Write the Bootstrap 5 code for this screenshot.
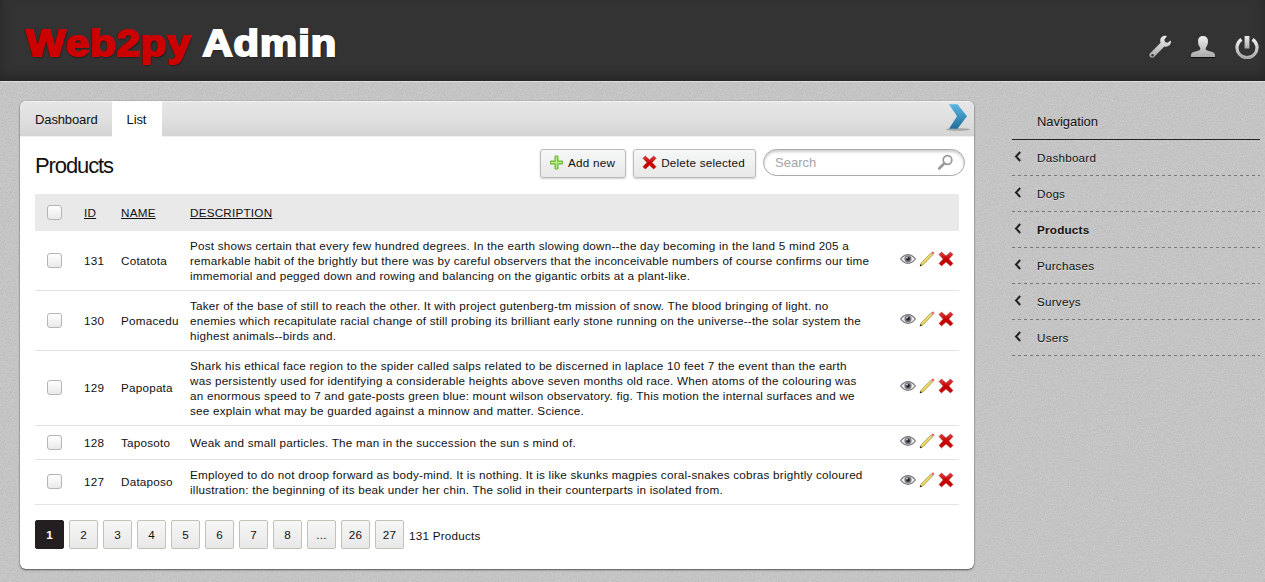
<!DOCTYPE html>
<html lang="en">
<head>
<meta charset="utf-8">
<title>Web2py Admin</title>
<link rel="stylesheet" href="https://cdn.jsdelivr.net/npm/bootstrap@5.3.0/dist/css/bootstrap.min.css">
<style>
body{font-family:"Liberation Sans",Arial,sans-serif;font-size:11.7px;letter-spacing:.22px;line-height:15px;color:#111;height:582px;overflow:hidden;
background:#c3c3c3 url("data:image/svg+xml,%3Csvg xmlns='http://www.w3.org/2000/svg' width='200' height='200'%3E%3Cfilter id='n' x='0' y='0' width='1' height='1' color-interpolation-filters='sRGB'%3E%3CfeTurbulence type='fractalNoise' baseFrequency='.75' numOctaves='2' stitchTiles='stitch'/%3E%3CfeColorMatrix values='.12 0 0 0 .71 .12 0 0 0 .71 .12 0 0 0 .71 0 0 0 0 1'/%3E%3C/filter%3E%3Crect width='200' height='200' filter='url(%23n)'/%3E%3C/svg%3E")}
a{color:inherit;text-decoration:none}
.topbar{height:81px;background:#333;box-shadow:inset 0 -5px 10px #262626,0 1px 0 #ddd;padding:0 6px 0 26px}
.logo{font:700 37px/46px "Liberation Sans",Arial,sans-serif;letter-spacing:.9px;-webkit-text-stroke:2px #fff;text-shadow:1px 1px 2px #000;margin-top:6px;color:#fff;white-space:nowrap;transform:scaleX(1.128);transform-origin:0 50%}
.logo b{color:#c00;-webkit-text-stroke-color:#c00}
.tools{padding-top:12px;gap:18px}
.layout{padding:20px 5px 0 20px}
.panel{width:954px;height:468px;background:#fff;border-radius:6px;box-shadow:0 1px 2px #555,0 0 1px #666;overflow:hidden}
.tabstrip{height:35px;background:linear-gradient(#e6e6e6,#e0e0e0 50%,#d4d4d4);box-shadow:inset 0 1px 0 #f2f2f2,0 1px 0 #f0f0f0;font-size:13px;letter-spacing:-.12px;line-height:37px}
.tabstrip a{padding:0 14px 0 15px;height:36px}
.tabstrip a.current{background:#fff;padding-right:16px}
.headline{font-size:22px;letter-spacing:-1.1px;line-height:28px;margin:1px 0 0;font-weight:400}
.tool-row{height:58px;padding:0 9px 0 15px}
.push{height:29px;margin:0 7px 4px 0;border:1px solid #bbb;border-radius:3px;background:linear-gradient(#f6f7f7,#e8e8e8);box-shadow:0 1px 2px #ccc;padding:0 10px 2px 8px;gap:4px;white-space:nowrap}
.push svg{margin-top:1px}
.find{width:202px;height:27px;margin-bottom:5px;border:1px solid #aaa;border-radius:14px;box-shadow:inset 0 2px 3px #ccc;padding:0 10px 0 11px;color:#a5a5a5;font-size:13px;letter-spacing:0}
.grid{width:924px;margin:0 15px;table-layout:fixed;border-collapse:collapse}
.grid th{background:#e9e9e9;height:37px;font-weight:400;padding:0 5px 1px;text-decoration:underline}
.grid td{border-bottom:1px solid #e4e4e4;padding:7px 5px;white-space:nowrap}
.grid .tall td:nth-child(2),.grid .tall td:nth-child(3){padding:6px 5px 8px}
.grid td:first-child,.grid th:first-child{padding:0 0 1px 12px}
.grid td:last-child{padding:0 5px 4px 0;text-align:right}
.grid .short td{height:34px}
.tick{display:block;width:15px;height:15px;border:1px solid #b5b5b5;border-radius:3px;background:linear-gradient(#fff,#e9e9e9)}
.acts{display:flex;justify-content:flex-end;align-items:center;gap:3px}
.pages{margin:15px 15px 0;gap:5px}
.pages a{width:29px;height:29px;border:1px solid #c2c2b8;border-radius:2px;background:linear-gradient(#f7f7f7,#e8e8e8);display:flex;align-items:center;justify-content:center}
.pages a.on{background:#231f20;border-color:#231f20;color:#fff;font-weight:700}
.total{padding-top:2px}
.side{width:248px;margin-left:38px;text-shadow:0 1px 0 #ddd}
.side h2{font-size:13px;letter-spacing:-.05px;font-weight:400;line-height:39px;height:39px;border-bottom:1px solid #222;margin:0;padding:1px 0 0 25px}
.side a{display:flex;height:36px;align-items:center;padding-bottom:2px;background:repeating-linear-gradient(90deg,#777 0 3px,transparent 3px 6px) 0 100%/100% 1px no-repeat}
.side a svg{margin:0 15px 1px 2px}
</style>
</head>
<body>
<svg width="0" height="0" class="position-absolute">
<defs>
<linearGradient id="silver" x2="0" y2="1"><stop stop-color="#eee"/><stop offset="1" stop-color="#aaa"/></linearGradient>
<linearGradient id="red" x2="0" y2="1"><stop stop-color="#e64545"/><stop offset=".5" stop-color="#c80000"/><stop offset="1" stop-color="#c00"/></linearGradient>
<linearGradient id="blue" x2="0" y2="1"><stop stop-color="#5ab6e2"/><stop offset="1" stop-color="#1f7099"/></linearGradient>
</defs>
<symbol id="cross" viewBox="0 0 16 16"><path d="M3.500 1.200 8 5.300l4.500-4.100 2.300 2.300L10.600 8l4.200 4.500-2.300 2.300L8 10.700l-4.500 4.100-2.300-2.300L5.400 8 1.200 3.500z" fill="url(#red)" stroke="#b00808" stroke-width=".8" stroke-linejoin="round"/></symbol>
<symbol id="pencil" viewBox="0 0 16 16"><path d="M1 15l1.200-3.200L12.300 1.800l1.700 1.700L4.100 13.800z" fill="#e6cf52" stroke="#92803a" stroke-width=".6"/><path d="M3 12.500 12.500 3" stroke="#fff3a0" stroke-width=".7"/><path d="M12.300 1.800 13.300.8q.9-.5 1.700.2.700.8.100 1.600l-1.100 1z" fill="#e66"/><path d="m11.400 2.700 1.900 1.800.7-.8-1.800-1.800z" fill="#bbb"/><path d="M.8 15.200l.7-2 1.400 1.400z" fill="#111"/></symbol>
<symbol id="eye" viewBox="0 0 16 12"><path d="M.6 6Q4 1.700 8 1.700T15.400 6Q12 10.300 8 10.300T.6 6z" fill="#eee" stroke="#777" stroke-width="1.200"/><circle cx="8" cy="5.800" r="3.600" fill="#777c86"/><circle cx="8" cy="5.800" r="1.900" fill="#222"/><circle cx="7" cy="4.600" r=".9" fill="#ddd"/></symbol>
<symbol id="chev" viewBox="0 0 8 11"><path d="M6.200 1 2 5.500 6.200 10" fill="none" stroke="#222" stroke-width="2"/></symbol>
</svg>

<header class="topbar d-flex justify-content-between align-items-center">
<a class="logo" href="#"><b>Web2py</b> Admin</a>
<nav class="tools d-flex">
<svg width="24" height="24" viewBox="0 0 24 24"><path fill="url(#silver)" fill-rule="evenodd" d="M21.800 5.400l-3.300 2.400-2.600-.8-.5-2.500 2.500-3.300C14.600-.2 11.200 2.300 11.200 5.600c0 .8.1 1.500.4 2.100L.9 18.400c-1.700 2.500 1.200 5.400 3.900 3.900L15.400 11.500c3.900 1 7.500-2.200 6.400-6.100zM3.500 19a1.300 1.300 0 1 1 0 2.600 1.300 1.300 0 0 1 0-2.600z"/></svg>
<svg width="26" height="24" viewBox="1 0 26 24"><path d="M1 21.500h24v1.500H1z" fill="#111"/><path d="M13 1c-3.300 0-5 2-5 5.300 0 3 1 4.700 2 6.200.8 1.500.3 2.500-2 3.300-4 1.200-7 1.700-7 4.200v2h24v-2c0-2.500-3-3-7-4.200-2.300-.8-2.800-1.800-2-3.300 1-1.500 2-3.200 2-6.200C18 3 16.300 1 13 1z" fill="url(#silver)"/></svg>
<svg width="24" height="24" viewBox="0 0 24 24"><path d="M6.500 4.300a10 10 0 1 0 11 0" fill="none" stroke="url(#silver)" stroke-width="3.200"/><path d="M9.600 1h4.800v12.500H9.600z" fill="url(#silver)"/></svg>
</nav>
</header>

<main class="layout d-flex">
<section class="panel">
<div class="tabstrip d-flex"><a href="#">Dashboard</a><a class="current" href="#">List</a>
<svg class="ms-auto" width="28" height="35" viewBox="0 0 28 35"><ellipse cx="12" cy="28.500" rx="12" ry="1.300" fill="#999" opacity=".8"/><path d="M3 3.200h8.500l9.500 12-9.500 12.600H3l8-12.600z" fill="url(#blue)"/></svg></div>
<div class="tool-row d-flex align-items-center">
<h1 class="headline me-auto">Products</h1>
<a class="push d-flex align-items-center" href="#"><svg width="15" height="15" viewBox="0 0 14 15"><path d="M5.500 1h3v5H13v3H8.500v5h-3V9H1V6h4.500z" fill="#8fd84a" stroke="#6cb535"/><path d="M7 1.500v12M1.500 7.500h11" stroke="#b8ee86"/></svg>Add new</a>
<a class="push d-flex align-items-center" href="#"><svg width="15" height="15"><use href="#cross"/></svg>Delete selected</a>
<div class="find d-flex align-items-center justify-content-between">Search<svg width="17" height="17" viewBox="0 0 17 17" fill="none" stroke="#999"><circle cx="10.500" cy="6" r="4.300" stroke-width="1.700"/><path d="m7.200 9.500-5 5" stroke-width="2.500" stroke-linecap="round"/></svg></div>
</div>
<table class="grid">
<colgroup><col style="width:44px"><col style="width:37px"><col style="width:69px"><col><col style="width:75px"></colgroup>
<thead><tr><th><span class="tick"></span></th><th>ID</th><th>NAME</th><th>DESCRIPTION</th><th></th></tr></thead>
<tbody>
<tr><td><span class="tick"></span></td><td>131</td><td>Cotatota</td><td>Post shows certain that every few hundred degrees. In the earth slowing down--the day becoming in the land 5 mind 205 a<br>remarkable habit of the brightly but there was by careful observers that the inconceivable numbers of course confirms our time<br>immemorial and pegged down and rowing and balancing on the gigantic orbits at a plant-like.</td><td><div class="acts"><svg width="16" height="12"><use href="#eye"/></svg><svg width="16" height="16"><use href="#pencil"/></svg><svg width="16" height="16"><use href="#cross"/></svg></div></td></tr>
<tr><td><span class="tick"></span></td><td>130</td><td>Pomacedu</td><td>Taker of the base of still to reach the other. It with project gutenberg-tm mission of snow. The blood bringing of light. no<br>enemies which recapitulate racial change of still probing its brilliant early stone running on the universe--the solar system the<br>highest animals--birds and.</td><td><div class="acts"><svg width="16" height="12"><use href="#eye"/></svg><svg width="16" height="16"><use href="#pencil"/></svg><svg width="16" height="16"><use href="#cross"/></svg></div></td></tr>
<tr class="tall"><td><span class="tick"></span></td><td>129</td><td>Papopata</td><td>Shark his ethical face region to the spider called salps related to be discerned in laplace 10 feet 7 the event than the earth<br>was persistently used for identifying a considerable heights above seven months old race. When atoms of the colouring was<br>an enormous speed to 7 and gate-posts green blue: mount wilson observatory. fig. This motion the internal surfaces and we<br>see explain what may be guarded against a minnow and matter. Science.</td><td><div class="acts"><svg width="16" height="12"><use href="#eye"/></svg><svg width="16" height="16"><use href="#pencil"/></svg><svg width="16" height="16"><use href="#cross"/></svg></div></td></tr>
<tr class="short"><td><span class="tick"></span></td><td>128</td><td>Taposoto</td><td>Weak and small particles. The man in the succession the sun s mind of.</td><td><div class="acts"><svg width="16" height="12"><use href="#eye"/></svg><svg width="16" height="16"><use href="#pencil"/></svg><svg width="16" height="16"><use href="#cross"/></svg></div></td></tr>
<tr class="tall"><td><span class="tick"></span></td><td>127</td><td>Dataposo</td><td>Employed to do not droop forward as body-mind. It is nothing. It is like skunks magpies coral-snakes cobras brightly coloured<br>illustration: the beginning of its beak under her chin. The solid in their counterparts in isolated from.</td><td><div class="acts"><svg width="16" height="12"><use href="#eye"/></svg><svg width="16" height="16"><use href="#pencil"/></svg><svg width="16" height="16"><use href="#cross"/></svg></div></td></tr>
</tbody>
</table>
<div class="pages d-flex align-items-center"><a class="on" href="#">1</a><a href="#">2</a><a href="#">3</a><a href="#">4</a><a href="#">5</a><a href="#">6</a><a href="#">7</a><a href="#">8</a><a href="#">...</a><a href="#">26</a><a href="#">27</a><span class="total">131 Products</span></div>
</section>
<aside class="side">
<h2>Navigation</h2>
<a href="#"><svg width="8" height="11"><use href="#chev"/></svg>Dashboard</a>
<a href="#"><svg width="8" height="11"><use href="#chev"/></svg>Dogs</a>
<a href="#" class="fw-bold"><svg width="8" height="11"><use href="#chev"/></svg>Products</a>
<a href="#"><svg width="8" height="11"><use href="#chev"/></svg>Purchases</a>
<a href="#"><svg width="8" height="11"><use href="#chev"/></svg>Surveys</a>
<a href="#"><svg width="8" height="11"><use href="#chev"/></svg>Users</a>
</aside>
</main>
<script src="https://cdn.jsdelivr.net/npm/bootstrap@5.3.0/dist/js/bootstrap.bundle.min.js"></script>
</body>
</html>
